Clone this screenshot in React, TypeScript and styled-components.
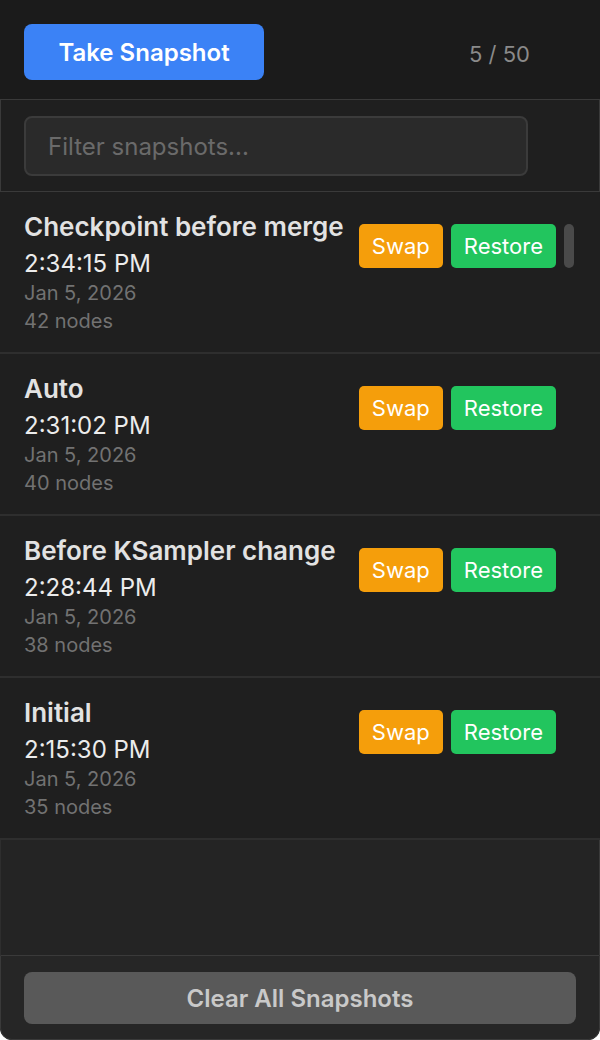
import React from 'react';
import styled, { createGlobalStyle } from 'styled-components';

const GlobalStyle = createGlobalStyle`
  html, body {
    margin: 0;
    padding: 0;
    background: #ffffff;
  }
  * {
    box-sizing: border-box;
  }
  body {
    font-family: Inter, "Noto Sans", sans-serif;
  }
`;

const Panel = styled.div`
  width: 600px;
  height: 1040px;
  display: flex;
  flex-direction: column;
  background: #1b1b1b;
  border-radius: 0 0 12px 12px;
  overflow: hidden;
`;

const Header = styled.div`
  height: 99px;
  display: flex;
  align-items: center;
  justify-content: space-between;
  padding: 24px 70px 19px 24px;
`;

const SnapshotButton = styled.button`
  width: 240px;
  height: 56px;
  border: none;
  border-radius: 8px;
  background: #3b82f6;
  color: #ffffff;
  font-family: inherit;
  font-size: 24px;
  font-weight: 600;
  cursor: pointer;
`;

const Counter = styled.span`
  padding-top: 3px;
  font-size: 22px;
  color: #8a8a8a;
`;

const FilterBar = styled.div`
  padding: 16px 71px 15px 23px;
  background: #1f1f1f;
  border: 1px solid #3a3a3a;
`;

const FilterInput = styled.input`
  width: 100%;
  height: 60px;
  padding: 0 22px;
  background: #2a2a2a;
  border: 2px solid #3b3b3b;
  border-radius: 8px;
  color: #dddddd;
  font-family: inherit;
  font-size: 24px;
  outline: none;

  &::placeholder {
    color: #6a6a6a;
  }
`;

const List = styled.div`
  flex: 1;
  display: flex;
  flex-direction: column;
  background: #242424;
  border-left: 1px solid #2e2e2e;
  border-right: 1px solid #3a3a3a;
`;

const Item = styled.div`
  display: flex;
  align-items: flex-start;
  gap: 16px;
  height: 162px;
  padding: 17px 26px 16px 24px;
  margin: 0 -1px;
  background: #1f1f1f;
  border-bottom: 2px solid #2e2e2e;
`;

const Info = styled.div`
  flex: 1;
  display: flex;
  flex-direction: column;
  min-width: 0;
`;

const Title = styled.div`
  font-size: 26px;
  font-weight: 600;
  line-height: 36px;
  margin-bottom: 3px;
  color: #e2e2e2;
  white-space: nowrap;
`;

const Time = styled.div`
  font-size: 24px;
  line-height: 31px;
  color: #ececec;
`;

const Meta = styled.div`
  font-size: 20px;
  line-height: 28px;
  color: #727272;
`;

const Actions = styled.div`
  display: flex;
  gap: 8px;
  margin-top: 15px;
`;

const ActionButton = styled.button<{ $tone: 'swap' | 'restore' }>`
  height: 44px;
  padding: 0 13px;
  border: none;
  border-radius: 5px;
  background: ${(p) => (p.$tone === 'swap' ? '#f59e0b' : '#22c55e')};
  color: #ffffff;
  font-family: inherit;
  font-size: 22px;
  cursor: pointer;
`;

const Thumb = styled.div<{ $visible: boolean }>`
  width: 10px;
  height: 44px;
  border-radius: 5px;
  background: ${(p) => (p.$visible ? '#4a4a4a' : 'transparent')};
`;

const Footer = styled.div`
  padding: 16px 23px 15px;
  background: #262626;
  border: 1px solid #3a3a3a;
  border-radius: 0 0 12px 12px;
`;

const ClearButton = styled.button`
  width: 100%;
  height: 52px;
  border: none;
  border-radius: 8px;
  background: #595959;
  color: #c9c9c9;
  font-family: inherit;
  font-size: 24px;
  font-weight: 600;
  cursor: pointer;
`;

const snapshots = [
  { title: 'Checkpoint before merge', time: '2:34:15 PM', date: 'Jan 5, 2026', nodes: 42 },
  { title: 'Auto', time: '2:31:02 PM', date: 'Jan 5, 2026', nodes: 40 },
  { title: 'Before KSampler change', time: '2:28:44 PM', date: 'Jan 5, 2026', nodes: 38 },
  { title: 'Initial', time: '2:15:30 PM', date: 'Jan 5, 2026', nodes: 35 },
];

export default function App() {
  return (
    <>
      <GlobalStyle />
      <Panel>
        <Header>
          <SnapshotButton>Take Snapshot</SnapshotButton>
          <Counter>5 / 50</Counter>
        </Header>

        <FilterBar>
          <FilterInput placeholder="Filter snapshots..." />
        </FilterBar>

        <List>
          {snapshots.map((s, i) => (
            <Item key={s.title}>
              <Info>
                <Title>{s.title}</Title>
                <Time>{s.time}</Time>
                <Meta>{s.date}</Meta>
                <Meta>{s.nodes} nodes</Meta>
              </Info>
              <Actions>
                <ActionButton $tone="swap">Swap</ActionButton>
                <ActionButton $tone="restore">Restore</ActionButton>
                <Thumb $visible={i === 0} />
              </Actions>
            </Item>
          ))}
        </List>

        <Footer>
          <ClearButton>Clear All Snapshots</ClearButton>
        </Footer>
      </Panel>
    </>
  );
}
